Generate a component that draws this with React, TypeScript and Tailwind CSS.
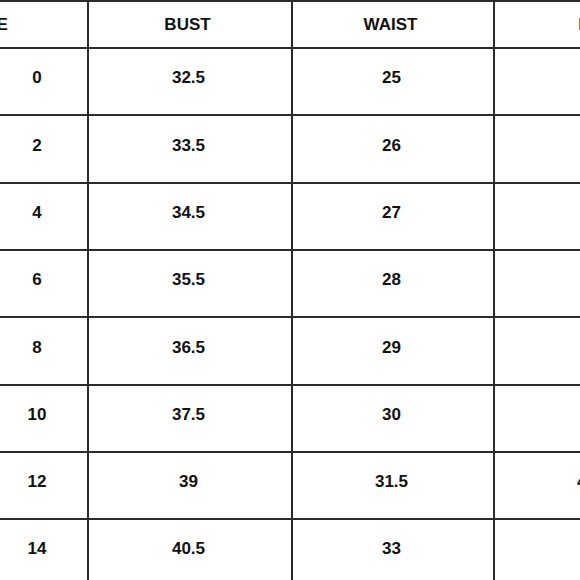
import React from "react";

// size chart rows: size, bust, waist, hip
const rows: [string, string, string, string][] = [
  ["0", "32.5", "25", "35"],
  ["2", "33.5", "26", "36"],
  ["4", "34.5", "27", "37"],
  ["6", "35.5", "28", "38"],
  ["8", "36.5", "29", "39"],
  ["10", "37.5", "30", "40"],
  ["12", "39", "31.5", "41.5"],
  ["14", "40.5", "33", "43"],
];

const headers = ["SIZE", "BUST", "WAIST", "HIP"];

const App = () => {
  return (
    <div className="w-screen h-screen overflow-hidden bg-white">
      <div
        className="ml-[-117px] w-max grid grid-cols-[204px_204px_202px_202px] grid-rows-[47px_67px_68px_67px_67px_68px_67px_67px_67px] border-t-2 border-l-2 border-[#2b2b2b] text-[#111] text-[17px] font-bold"
        style={{ fontFamily: '"Liberation Sans", Arial, sans-serif' }}
      >
        {headers.map((h, i) => (
          <div
            key={h}
            className={
              "flex items-center justify-center border-r-2 border-b-2 border-[#2b2b2b] leading-none " +
              (i === 0 ? "pl-[6px]" : "pr-[5px]")
            }
          >
            {h}
          </div>
        ))}
        {rows.map((row) =>
          row.map((cell, i) => (
            <div
              key={row[0] + "-" + i}
              className={
                "flex items-center justify-center border-r-2 border-b-2 border-[#2b2b2b] pb-[8px] leading-none " +
                (i === 0 ? "pl-[102px]" : "pr-[3px]")
              }
            >
              {cell}
            </div>
          ))
        )}
      </div>
    </div>
  );
};

export default App;
